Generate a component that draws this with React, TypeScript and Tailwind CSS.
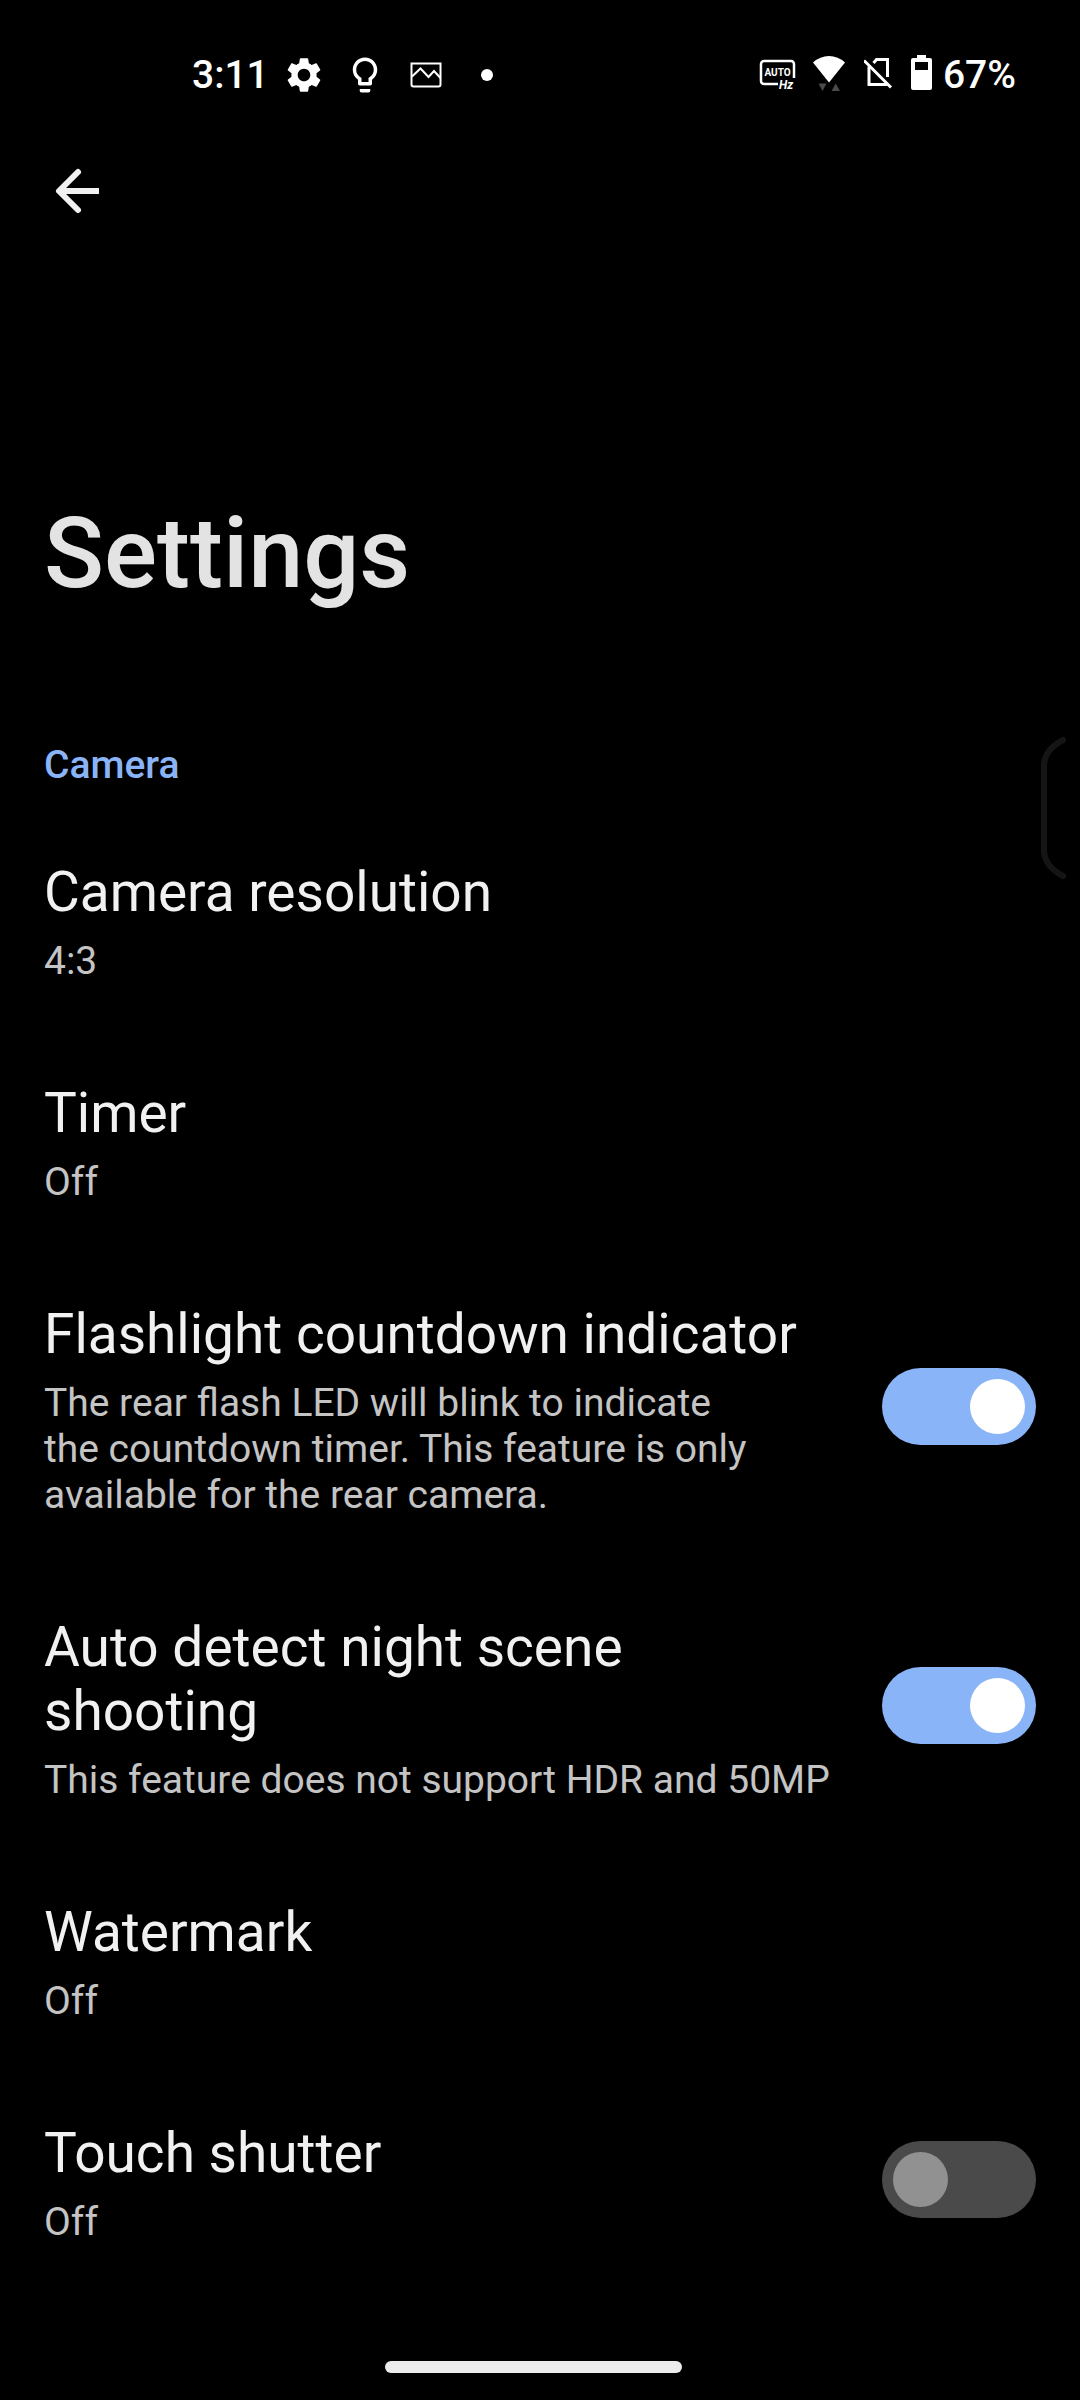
import { useState } from "react";
import { MdSettings, MdLightbulbOutline } from "react-icons/md";

type Setting = {
  id: string;
  title: string;
  summary: string;
  toggle?: boolean;
};

const cameraSettings: Setting[] = [
  { id: "resolution", title: "Camera resolution", summary: "4:3" },
  { id: "timer", title: "Timer", summary: "Off" },
  {
    id: "flashlight",
    title: "Flashlight countdown indicator",
    summary:
      "The rear flash LED will blink to indicate\nthe countdown timer. This feature is only\navailable for the rear camera.",
    toggle: true,
  },
  {
    id: "night",
    title: "Auto detect night scene shooting",
    summary: "This feature does not support HDR and 50MP",
    toggle: true,
  },
  { id: "watermark", title: "Watermark", summary: "Off" },
  { id: "touch-shutter", title: "Touch shutter", summary: "Off", toggle: true },
];

const PictureIcon = () => (
  <svg viewBox="0 0 42 42" className="h-[42px] w-[42px]" fill="none" stroke="white" strokeWidth="2">
    <path d="M6.5 9.5h29v21a2 2 0 0 1-2 2h-25a2 2 0 0 1-2-2z" />
    <path d="M7 22.5L15.5 14.500l8 8.500 5.500-6 6.500 7" />
  </svg>
);

const AutoHzIcon = () => (
  <svg viewBox="0 0 37 40" className="h-10 w-[37px] overflow-visible" fill="none">
    <path d="M19 31H5a3 3 0 0 1-3-3V11a3 3 0 0 1 3-3h27a3 3 0 0 1 3 3v14" stroke="white" strokeWidth="2.5" />
    <text x="18.5" y="23" textAnchor="middle" fill="white" fontSize="10" fontWeight="700">
      AUTO
    </text>
    <text x="20" y="36" fill="white" fontSize="12" fontWeight="700" fontStyle="italic">
      Hz
    </text>
  </svg>
);

const WifiIcon = () => (
  <svg viewBox="0 0 34 36" className="h-9 w-[34px]" fill="white">
    <path d="M0 7.5Q7 1 16 1T32 7.5L16 27.5z" />
    <path d="M5.5 28.5h8l-4 7.5zM18.500 36h8.500l-4.250-7.500z" fill="#4a4a4a" />
  </svg>
);

const NoSimIcon = () => (
  <svg viewBox="0 0 30 36" className="h-9 w-[30px]" fill="none" stroke="white" strokeWidth="3">
    <path d="M0 5.5L27 32.5" />
    <path d="M9.5 8l3-3.500h11V22" />
    <path d="M5 11.5V29.5h18" />
  </svg>
);

const BatteryIcon = () => (
  <svg viewBox="0 0 21 36" className="h-9 w-[21px]" fill="white" fillRule="evenodd">
    <path d="M6 0h9v3h4a2 2 0 0 1 2 2v28a2 2 0 0 1-2 2H2a2 2 0 0 1-2-2V5a2 2 0 0 1 2-2h4zM4 7v8h13V7z" />
  </svg>
);

const StatusBar = () => (
  <header className="flex h-[150px] items-center justify-between pl-48 pr-16 text-[39px] font-medium leading-[46px] text-white">
    <div className="flex items-center gap-3.5">
      <span>3:11</span>
      <div className="flex items-center gap-[19px]">
        <MdSettings className="h-[42px] w-[42px]" />
        <MdLightbulbOutline className="h-[42px] w-[42px]" />
        <PictureIcon />
        <span className="flex w-[42px] justify-center">
          <span className="h-3 w-3 rounded-full bg-white" />
        </span>
      </div>
    </div>
    <div className="flex items-center gap-[11px]">
      <div className="flex items-center gap-[17px] pb-1">
        <AutoHzIcon />
        <WifiIcon />
        <NoSimIcon />
        <BatteryIcon />
      </div>
      <span>67%</span>
    </div>
  </header>
);

const Switch = ({ id, defaultChecked }: { id: string; defaultChecked: boolean }) => {
  const [checked, setChecked] = useState(defaultChecked);

  return (
    <input
      id={id}
      type="checkbox"
      role="switch"
      checked={checked}
      onChange={(e) => setChecked(e.target.checked)}
      className="flex h-[77px] w-[154px] shrink-0 cursor-pointer appearance-none items-center rounded-full bg-[#4a4a4a] px-[11px] before:h-[55px] before:w-[55px] before:rounded-full before:bg-[#919191] checked:justify-end checked:bg-[#8ab4f8] checked:before:bg-white"
    />
  );
};

const RowText = ({ title, summary }: { title: string; summary: string }) => (
  <span className="flex flex-1 flex-col gap-3.5 pt-2">
    <span className="text-[55px] leading-[64px] text-[#f1f1f1]">{title}</span>
    <span className="whitespace-pre-line text-[39px] leading-[46px] text-[#c4c4c4]">{summary}</span>
  </span>
);

const SettingRow = ({ id, title, summary, toggle }: Setting) => {
  if (toggle) {
    return (
      <li className="flex items-center gap-11 px-11 pb-[45px] pt-11">
        <label htmlFor={id} className="flex flex-1 cursor-pointer">
          <RowText title={title} summary={summary} />
        </label>
        <Switch id={id} defaultChecked={summary !== "Off"} />
      </li>
    );
  }

  return (
    <li>
      <button type="button" className="flex w-full cursor-pointer px-11 pb-[45px] pt-11 text-left">
        <RowText title={title} summary={summary} />
      </button>
    </li>
  );
};

const App = () => {
  return (
    <div className="relative flex min-h-screen flex-col bg-black font-['Roboto',sans-serif]">
      <StatusBar />

      <nav className="px-11 pt-2">
        <button type="button" aria-label="Back" className="block cursor-pointer">
          <svg viewBox="0 0 66 66" className="h-[66px] w-[66px]" fill="none" stroke="#f1f1f1" strokeWidth="6">
            <path d="M55 33H16" />
            <path d="M34 14L15 33l19 19" strokeLinecap="round" strokeLinejoin="round" />
          </svg>
        </button>
      </nav>

      <main>
        <h1 className="px-11 pt-[271px] text-[99px] font-medium leading-[116px] text-[#e3e3e3]">Settings</h1>
        <section className="pt-[131px]">
          <h2 className="px-11 pb-5 text-[39px] font-medium leading-[46px] text-[#8ab4f8]">Camera</h2>
          <ul>
            {cameraSettings.map((setting) => (
              <SettingRow key={setting.id} {...setting} />
            ))}
          </ul>
        </section>
      </main>

      {/* edge panel handle */}
      <svg
        viewBox="0 0 28 144"
        className="absolute right-3 top-[736px] h-36 w-7"
        fill="none"
        stroke="#151515"
        strokeWidth="6"
        strokeLinecap="round"
      >
        <path d="M23 4Q4 14 4 30V114Q4 130 23 140" />
      </svg>

      <footer className="mt-auto flex justify-center pb-[27px] pr-[13px]">
        <div className="h-3 w-[297px] rounded-full bg-[#ececec]" />
      </footer>
    </div>
  );
};

export default App;
